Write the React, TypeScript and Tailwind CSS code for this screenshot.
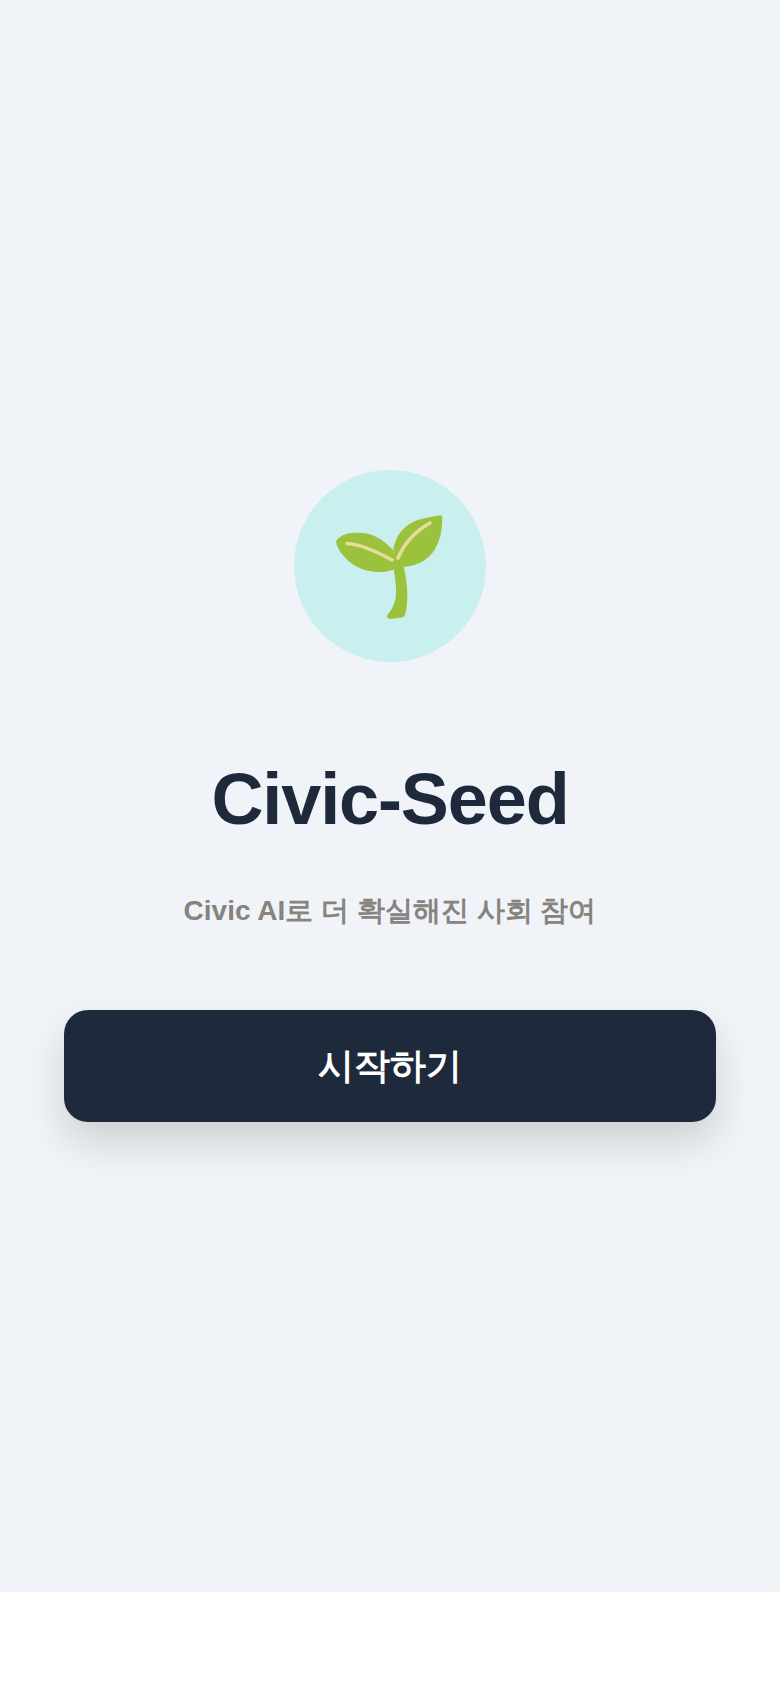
function Sprout() {
  return (
    <svg viewBox="0 0 192 192" className="h-48 w-48 blur-[0.6px]">
      <path
        d="M98 92C101.500 106 103 120 101.500 129C100 136 96.500 141 93.500 145C92 148 95 149.200 98 148.800L107.500 147.500C110 147 111 145.500 111.500 143C114.500 130 114 112 108.500 92Z"
        fill="#9bc23d"
      />
      <path
        d="M42 71C46 66 51 63.500 58 63C65 62.200 72 62.800 78 65C86 68 93 73.500 99.300 80.300L102 99C95 101.500 89 102.500 82.700 102C76 101.500 71 100.500 66 98.300C60 95.500 56 93 52.700 89.300C48.500 85 46 82 44.300 78.300C43.300 76 42.300 73.500 42 71Z"
        fill="#9bc23d"
      />
      <path
        d="M99.300 78C101 72 103 67 106 62.700C109.500 58.500 113 55 117.700 52.700C122 50.300 127 48.800 132.700 47.700L146 45.300C148 45.300 148.500 47 148.300 49.300C148.200 54.500 147.800 59.500 146.700 64.300C145.500 69.500 143.500 75 141 79.300C138 84 134 88 129.300 91C125 93.500 121 95 116 96C111 97 106 97.500 101 98Z"
        fill="#9bc23d"
      />
      <path d="M53 73.500C65 74 78 79 98 90" fill="none" stroke="#e8dc9a" strokeWidth="3.600" strokeLinecap="round" />
      <path d="M104 88C110 74 120 62 136 53" fill="none" stroke="#e8dc9a" strokeWidth="3.600" strokeLinecap="round" />
    </svg>
  );
}

export default function App() {
  return (
    <div className="min-h-[1688px] bg-white font-['Liberation_Sans',sans-serif]">
      <main className="flex h-[1592px] flex-col items-center justify-center bg-[#f0f4f8] px-16">
        <div className="h-48 w-48 rounded-full bg-[#c9f0ee]">
          <Sprout />
        </div>
        <h1 className="mt-[101px] text-center text-[72px] leading-none font-bold tracking-[-1.1px] text-[#1e293b]">Civic-Seed</h1>
        <p className="mt-[55px] text-center text-[28px] leading-[42px] font-semibold text-[#87837f]">Civic AI로 더 확실해진 사회 참여</p>
        <button className="mt-[78px] h-28 w-full rounded-3xl bg-[#1e293b] text-4xl font-semibold text-white shadow-[0_20px_40px_rgba(0,0,0,0.15)]">
          시작하기
        </button>
      </main>
    </div>
  );
}
